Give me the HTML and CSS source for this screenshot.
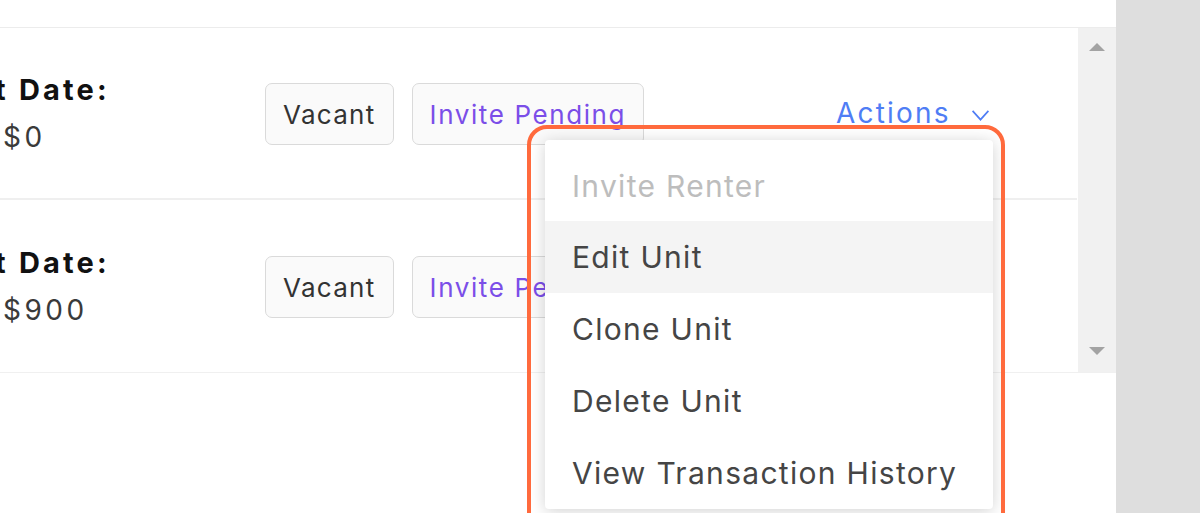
FILE: index.html
```html
<!DOCTYPE html>
<html>
<head>
<meta charset="utf-8">
<link rel="stylesheet" href="styles.css">
</head>
<body>
<div class="page">
  <div class="main">
    <div class="table">
      <div class="list">
        <div class="row">
          <div class="info">
            <div class="label">t Date:</div>
            <div class="value">$0</div>
          </div>
          <div class="badges">
            <span class="badge">Vacant</span>
            <span class="badge invite">Invite Pending</span>
          </div>
          <div class="actions">Actions
            <svg class="chev" viewBox="0 0 20 14" width="19" height="13"><path d="M1.5 2 L10 11.5 L18.5 2" fill="none" stroke="#4f7df5" stroke-width="1.8"/></svg>
          </div>
        </div>
        <div class="row">
          <div class="info">
            <div class="label">t Date:</div>
            <div class="value">$900</div>
          </div>
          <div class="badges">
            <span class="badge">Vacant</span>
            <span class="badge invite">Invite Pending</span>
          </div>
          <div class="actions">Actions
            <svg class="chev" viewBox="0 0 20 14" width="19" height="13"><path d="M1.5 2 L10 11.5 L18.5 2" fill="none" stroke="#4f7df5" stroke-width="1.8"/></svg>
          </div>
        </div>
      </div>
      <div class="scrollbar">
        <svg viewBox="0 0 16 8" width="16" height="8"><path d="M0 8 L8 0 L16 8 Z" fill="#a3a3a3"/></svg>
        <svg viewBox="0 0 16 8" width="16" height="8"><path d="M0 0 L16 0 L8 8 Z" fill="#a3a3a3"/></svg>
      </div>
    </div>
    <div class="menu">
      <div class="item disabled">Invite Renter</div>
      <div class="item hover">Edit Unit</div>
      <div class="item">Clone Unit</div>
      <div class="item">Delete Unit</div>
      <div class="item">View Transaction History</div>
    </div>
    <div class="highlight"></div>
  </div>
  <div class="side"></div>
</div>
</body>
</html>
```
FILE: styles.css
```css
html, body {
  margin: 0;
  padding: 0;
  background: #ffffff;
  overflow: hidden;
}
body {
  width: 1200px;
  height: 513px;
  font-family: "Inter", "Noto Sans", sans-serif;
}
.page {
  display: flex;
  width: 1200px;
  height: 513px;
}
.main {
  position: relative;
  width: 1116px;
  padding-top: 27px;
  box-sizing: border-box;
  overflow: hidden;
}
.side {
  flex: 1;
  background: #dedede;
}
.table {
  display: flex;
  border-top: 1.5px solid #ececec;
  border-bottom: 1.5px solid #f0f0f0;
  height: 346px;
  box-sizing: border-box;
}
.list {
  width: 1078px;
  display: flex;
  flex-direction: column;
}
.row {
  height: 172px;
  flex: none;
  display: flex;
  align-items: center;
  border-bottom: 2px solid #efefef;
  box-sizing: border-box;
  width: 1077px;
}
.row:last-child {
  border-bottom: none;
}
.info {
  width: 265px;
  display: flex;
  flex-direction: column;
  gap: 13px;
  margin-top: 0;
}
.label {
  font-weight: 700;
  font-size: 29px;
  color: #111;
  margin-left: -5px;
  letter-spacing: 3.2px;
  line-height: 34px;
}
.value {
  font-size: 28px;
  color: #3a3a3a;
  margin-left: 3px;
  letter-spacing: 3.5px;
  line-height: 34px;
}
.badges {
  display: flex;
  gap: 18px;
  width: 571px;
}
.badge {
  height: 62px;
  box-sizing: border-box;
  display: flex;
  align-items: center;
  padding: 0 17px;
  border: 1.5px solid #dadada;
  border-radius: 7px;
  background: #fafafa;
  font-size: 26px;
  letter-spacing: 1.3px;
  color: #333;
  margin-top: 2px;
}
.badge.invite {
  color: #7b4ee8;
  letter-spacing: 1.6px;
}
.actions {
  display: flex;
  align-items: center;
  gap: 20px;
  font-size: 28px;
  letter-spacing: 2.2px;
  color: #4f7df5;
  margin-top: 0;
}
.chev {
  margin-top: 4px;
}
.scrollbar {
  width: 38px;
  background: #f1f1f1;
  display: flex;
  flex-direction: column;
  justify-content: space-between;
  align-items: center;
  padding: 15px 0 17px;
  box-sizing: border-box;
}
.menu {
  position: absolute;
  left: 545px;
  top: 140px;
  width: 448px;
  background: #fff;
  padding-top: 10px;
  box-shadow: 0 2px 16px rgba(0,0,0,0.18);
  border-radius: 4px;
}
.item {
  height: 72px;
  display: flex;
  align-items: center;
  padding-left: 27px;
  font-size: 30px;
  letter-spacing: 1.3px;
  color: #454545;
}
.item.disabled {
  color: #bdbdbd;
  height: 71px;
}
.item.hover {
  background: #f4f4f4;
}
.highlight {
  position: absolute;
  left: 527px;
  top: 125px;
  width: 478px;
  height: 420px;
  box-sizing: border-box;
  border: 4px solid #ff6a3d;
  border-radius: 20px;
}
```
